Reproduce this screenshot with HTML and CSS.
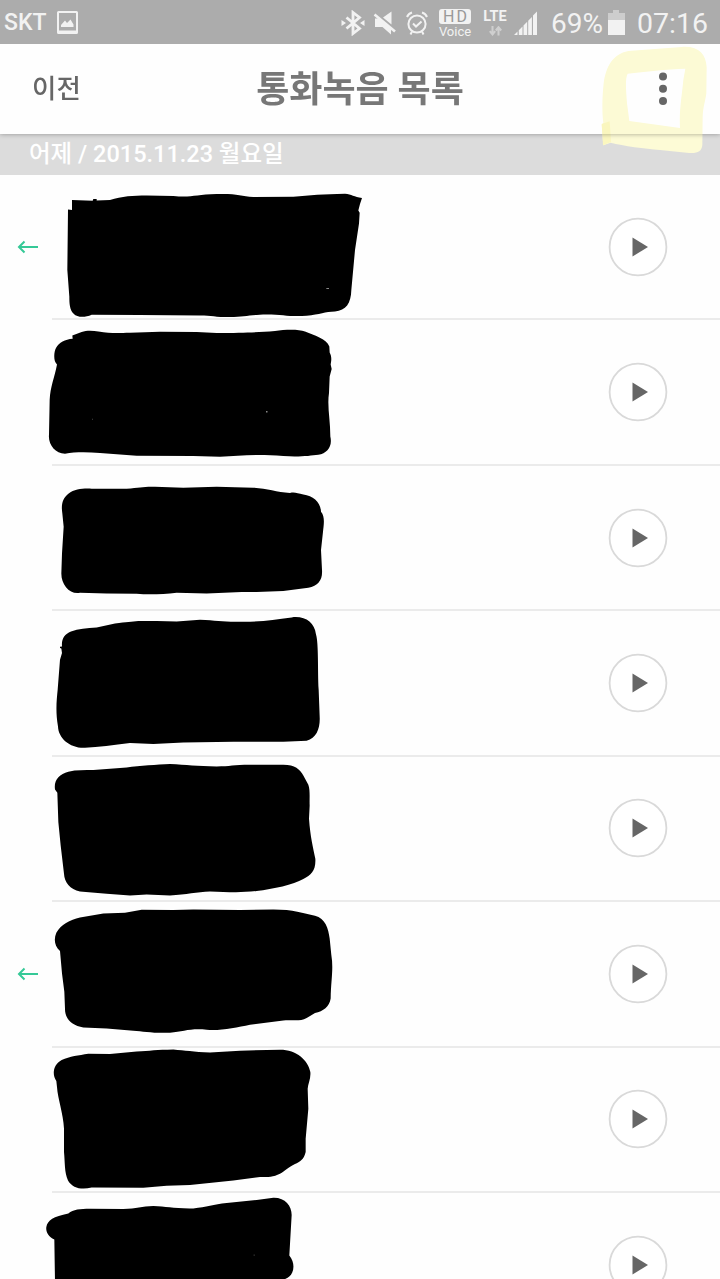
FILE: index.html
```html
<!DOCTYPE html>
<html lang="ko">
<head>
    <meta charset="UTF-8">
    <meta name="viewport" content="width=device-width, initial-scale=1.0">
    <title>통화녹음 목록</title>
    <link rel="stylesheet" href="styles.css">
</head>
<body>
    <svg class="defs" width="0" height="0">
        <symbol id="arrow" viewBox="0 0 22 14">
            <path d="M21 7H2M7.500 1.500L2 7l5.500 5.500" fill="none" stroke="#35c997" stroke-width="2"/>
        </symbol>
        <symbol id="play" viewBox="0 0 60 60">
            <circle cx="30" cy="30" r="28.4" fill="#fff" stroke="#d9d9d9" stroke-width="1.8"/>
            <path d="M24.5 20.5v19l15.5-9.5z" fill="#666"/>
        </symbol>
    </svg>

    <div class="phone">
        <div class="status-bar">
            <span class="carrier">SKT</span>
            <svg class="icon-picture" width="21" height="23" viewBox="0 0 21 23">
                <path fill="#f2f2f2" fill-rule="evenodd" d="M1.5 0h18a1.5 1.5 0 0 1 1.5 1.5v20a1.5 1.5 0 0 1-1.5 1.5h-18A1.5 1.5 0 0 1 0 21.500v-20A1.500 1.500 0 0 1 1.500 0zM2 2v17.500h17V2z"/>
                <path fill="#f2f2f2" d="M4 16v-2l4-4.500 2 2.500 3.500-3.500 3 5V16z"/>
            </svg>

            <div class="status-right">
                <svg class="icon-bluetooth" width="24" height="26" viewBox="0 0 24 26">
                    <path d="M5.500 7.500l13 11-6.500 5V2.500l6.500 5-13 11" fill="none" stroke="#f2f2f2" stroke-width="2.800"/>
                    <path d="M0.500 10l4.500 3-4.500 3zM23.500 10l-4.500 3 4.500 3z" fill="#f2f2f2"/>
                </svg>
                <svg class="icon-mute" width="24" height="26" viewBox="0 0 24 26">
                    <path d="M2 8.500h5.500L18 18v6.500L9.500 17H2zM10 7.500L18.500 1.500v13z" fill="#f2f2f2"/>
                    <path d="M1.500 4.500L22 21.500" stroke="#f2f2f2" stroke-width="2.600"/>
                </svg>
                <svg class="icon-alarm" width="24" height="26" viewBox="0 0 24 26">
                    <g fill="none" stroke="#f2f2f2" stroke-width="2">
                        <circle cx="12" cy="14" r="8.600"/>
                        <path d="M8 13.500l3 3 5.500-5M2 7q1.500-3.500 5-4.500M22 7q-1.500-3.500-5-4.500M7 21.500l-1.500 3M17 21.500l1.500 3"/>
                    </g>
                </svg>
                <div class="hd-voice">
                    <span class="hd">HD</span>
                    <span class="voice">Voice</span>
                </div>
                <div class="lte">
                    <span>LTE</span>
                    <svg width="13" height="10" viewBox="0 0 13 10">
                        <path d="M3.500 0v8M.8 5.200l2.700 3.300 2.700-3.300M9.500 9.500v-8M6.800 4.500l2.700-3.300 2.700 3.300" fill="none" stroke="#cfcfcf" stroke-width="2"/>
                    </svg>
                </div>
                <svg class="icon-signal" width="23" height="24" viewBox="0 0 23 24">
                    <path d="M0 24l3.500-3.500V24zM4.800 19.200l3.700-3.700V24H4.800zM9.500 14.500l3.700-3.700V24H9.500zM14.200 9.800l3.700-3.700V24h-3.700zM19 4.500l4-4V24h-4z" fill="#f2f2f2"/>
                </svg>
                <span class="battery-text">69%</span>
                <svg class="icon-battery" width="17" height="25" viewBox="0 0 17 25">
                    <path d="M0 3h5V0h6v3h6v7H0z" fill="#cdcdcd"/>
                    <path d="M0 10h17v15H0z" fill="#f2f2f2"/>
                </svg>
                <span class="clock">07:16</span>
            </div>
        </div>

        <div class="header">
            <span class="back">이전</span>
            <h1>통화녹음 목록</h1>
            <svg class="menu" width="10" height="34" viewBox="0 0 10 34">
                <g fill="#666">
                    <circle cx="5" cy="4.500" r="4"/>
                    <circle cx="5" cy="16.800" r="4"/>
                    <circle cx="5" cy="29.100" r="4"/>
                </g>
            </svg>
            <!-- 형광펜 표시 -->
            <svg class="marker" width="130" height="140" viewBox="0 0 390 420">
                <path fill="#fdfbd6" fill-rule="evenodd" d="M40 248C36 220 36 175 41 130C48 80 68 42 115 33L275 21C325 17 348 42 350 82L349 160C347 180 339 200 338 230L337 315C335 338 318 341 290 338L210 330C165 326 100 318 62 308L40 316L35 254zM113 101C105 115 108 150 111 190L118 243L270 264C267 210 276 165 280 120L286 86C230 87 165 96 113 101z"/>
                <path fill="#fbf7bf" d="M35 252l24-8 4 62-24 10z"/>
            </svg>
        </div>

        <div class="date-bar">어제 / 2015.11.23 월요일</div>

        <ul class="record-list">
            <li class="record">
                <svg class="direction"><use href="#arrow"/></svg>
                <div class="record-body"><svg class="play"><use href="#play"/></svg></div>
                <svg class="scribble" viewBox="0 -15 1140 436">
                    <path d="M216 60L278 62L280 57H290V61L330 60C365 48 400 46 440 46L520 48C575 53 585 44 650 42C710 40 722 48 760 51L880 50C930 46 970 42 1035 41C1055 43 1062 50 1086 54L1080 72L1075 91L1079 98L1077 130L1065 210L1054 330C1053 370 1038 392 1005 394C975 394 960 403 920 407C870 411 850 403 800 403C750 404 735 410 690 411C645 411 635 406 600 406L420 405L275 404C255 413 232 413 221 401C209 390 208 370 208 350L202 270L204 88L216 90z"/>
                    <path class="speck" d="M979 324h8v2h-8z"/>
                </svg>
            </li>
            <li class="record">
                <svg class="direction"></svg>
                <div class="record-body"><svg class="play"><use href="#play"/></svg></div>
                <svg class="scribble" viewBox="0 421 1140 436">
                    <path d="M217 467L245 457C260 451 280 453 295 455C330 461 350 460 390 459L480 456L590 457L650 460C730 460 770 458 825 454C855 449 895 448 915 455C945 467 980 477 988 500L989 518C996 530 994 545 992 554L995 568L989 590L987 640C981 680 991 720 991 770C998 800 982 820 955 825C930 828 900 832 850 829C770 822 720 828 660 831L580 829L410 828L300 820C260 817 225 817 195 822C165 822 144 794 147 765L149 660C151 620 163 595 171 554C159 545 162 515 168 505C177 488 195 479 218 477z"/>
                    <path class="speck" d="M799 694h3v4h-3z"/>
                    <path class="speck dim" d="M276 717h3v3h-3z"/>
                </svg>
            </li>
            <li class="record">
                <svg class="direction"></svg>
                <div class="record-body"><svg class="play"><use href="#play"/></svg></div>
                <svg class="scribble" viewBox="0 -12 1140 436">
                    <path d="M187 130C183 105 187 85 205 71C225 56 250 55 275 56L380 56C420 53 430 49 465 50L550 53L650 50L760 53C800 55 830 66 870 69C885 65 892 71 910 73C940 78 962 95 963 125C976 140 971 165 969 185L963 240L966 300C968 330 955 347 925 353L850 363L770 366L725 366L620 370L530 368C490 372 450 375 410 371L320 370L240 368C210 374 184 345 184 310L186 250L191 170z"/>
                </svg>
            </li>
            <li class="record">
                <svg class="direction"></svg>
                <div class="record-body"><svg class="play"><use href="#play"/></svg></div>
                <svg class="scribble" viewBox="0 424 1140 436">
                    <path d="M180 531L186 530C184 508 193 493 213 485C235 477 260 475 290 473L345 461C380 457 395 457 415 454L470 454L530 455L600 450C650 452 670 457 720 456C780 457 820 450 875 443C915 438 943 457 948 494C956 520 953 600 956 660L959 740C961 775 950 805 920 813L850 816L700 816L550 818L460 823L390 820C340 827 295 832 255 834C210 836 175 805 174 770C166 725 170 690 173 660L180 570L186 550L184 536L180 535z"/>
                </svg>
            </li>
            <li class="record">
                <svg class="direction"></svg>
                <div class="record-body"><svg class="play"><use href="#play"/></svg></div>
                <svg class="scribble" viewBox="0 5 1140 436">
                    <path d="M165 102C161 75 177 57 205 49C230 43 255 45 280 44L380 36C420 31 470 28 510 26C560 28 590 33 650 33C690 33 700 28 750 28L850 28C885 28 900 42 910 60L925 88C931 105 928 130 929 150L927 190C931 245 939 275 946 310C948 345 934 360 910 371C880 388 820 401 770 407C720 413 680 410 630 408C590 409 560 417 510 420L440 417L390 420L320 415L240 408C210 402 193 380 192 355L182 270L175 200L172 112z"/>
                </svg>
            </li>
            <li class="record">
                <svg class="direction"><use href="#arrow"/></svg>
                <div class="record-body"><svg class="play"><use href="#play"/></svg></div>
                <svg class="scribble" viewBox="0 441 1140 436">
                    <path d="M180 588C163 573 161 552 169 533C182 508 210 494 240 487L310 475L375 473L425 464L520 465L580 463L720 465L820 463C880 463 910 474 945 482C976 490 985 520 989 550L994 600C1001 640 993 675 992 730C988 755 970 768 945 774L920 789C900 800 880 794 850 796L750 809C710 817 660 828 620 824C570 819 550 830 510 833C460 835 430 829 400 827L320 820L250 817C215 812 194 790 195 760L193 710L186 655z"/>
                </svg>
            </li>
            <li class="record">
                <svg class="direction"></svg>
                <div class="record-body"><svg class="play"><use href="#play"/></svg></div>
                <svg class="scribble" viewBox="0 38 1140 436">
                    <path d="M169 137C155 117 160 87 185 74C210 62 235 60 265 55L330 56L410 48C450 46 470 43 520 42C555 45 580 49 630 51L720 46L840 43C890 43 925 75 931 110C933 130 924 145 923 160L925 220L917 310V350C911 374 900 379 885 386C865 395 855 408 840 415C820 425 805 425 780 425L700 435L570 449L500 451L430 457L275 456C245 464 217 458 204 435C193 412 195 380 192 350V280C190 235 173 190 171 155z"/>
                </svg>
            </li>
            <li class="record">
                <svg class="direction"></svg>
                <div class="record-body"><svg class="play"><use href="#play"/></svg></div>
                <svg class="scribble" viewBox="0 474 1140 436">
                    <path d="M163 613C144 605 137 588 139 576C143 554 160 545 205 535C220 523 240 521 270 521L370 522C410 521 425 514 460 513C500 514 520 521 580 520C620 517 640 508 680 504L770 495L820 488C855 487 875 512 875 540L868 661C884 680 883 705 873 719C866 728 858 731 855 732V740H165z"/>
                    <path class="speck dim" d="M761 658h3v4h-3z"/>
                </svg>
            </li>
        </ul>
    </div>
</body>
</html>
```

FILE: styles.css
```css
* {
    box-sizing: border-box;
}
body {
    margin: 0;
    background: #fff;
    font-family: Roboto, "Noto Sans CJK KR", sans-serif;
}
svg {
    display: block;
    flex-shrink: 0;
}
.defs {
    position: absolute;
}
.phone {
    width: 720px;
    height: 1279px;
    overflow: hidden;
    background: #fefefe;
}

/* 상태바 */
.status-bar {
    display: flex;
    align-items: center;
    height: 44px;
    padding: 1px 10px 0 4px;
    background: #acacac;
    color: #f2f2f2;
}
.carrier {
    width: 53px;
    font-size: 23px;
    font-weight: 500;
}
.status-right {
    display: flex;
    align-items: center;
    margin-left: auto;
}
.icon-mute {
    margin-left: 8px;
}
.icon-alarm {
    margin-left: 8px;
}
.hd-voice {
    display: flex;
    flex-direction: column;
    align-items: center;
    width: 32px;
    margin-left: 10px;
}
.hd {
    width: 32px;
    height: 15px;
    border-radius: 3px;
    background: #f2f2f2;
    color: #999;
    font-size: 16px;
    line-height: 15px;
    letter-spacing: 2px;
    text-indent: 2px;
    text-align: center;
}
.voice {
    margin-top: 2px;
    font-size: 13px;
    line-height: 11px;
}
.lte {
    display: flex;
    flex-direction: column;
    align-items: center;
    width: 26px;
    margin-left: 11px;
    font-size: 14.5px;
    font-weight: 700;
    line-height: 14px;
}
.lte svg {
    margin-top: 2px;
}
.icon-signal {
    margin-left: 6px;
}
.battery-text {
    width: 57px;
    margin-left: 14px;
    padding-top: 2px;
    font-size: 28px;
}
.icon-battery {
    margin-right: 12px;
}
.clock {
    width: 73px;
    padding-top: 2px;
    font-size: 28.5px;
}

/* 상단 헤더 */
.header {
    position: relative;
    z-index: 1;
    display: grid;
    grid-template-columns: 1fr auto 1fr;
    align-items: center;
    height: 90px;
    padding: 0 32px;
    background: #fefefe;
    color: #666;
    box-shadow: 0 0 5px rgba(0,0,0,0.35);
    clip-path: inset(0 0 -20px 0);
}
.back {
    padding-bottom: 6px;
    font-size: 26.5px;
    font-weight: 500;
}
.header h1 {
    margin: 0;
    padding-bottom: 7px;
    font-size: 36px;
    font-weight: 700;
    color: #777;
}
.menu {
    justify-self: end;
    margin-right: 20px;
}
.marker {
    position: absolute;
    top: -4px;
    right: 0;
    mix-blend-mode: multiply;
}
.date-bar {
    height: 41px;
    padding-left: 29px;
    background: #dcdcdc;
    color: #fff;
    font-size: 23.5px;
    font-weight: 500;
    line-height: 41px;
}

/* 녹음 목록 */
.record-list {
    margin: 0;
    padding: 0;
    list-style: none;
}
.record {
    position: relative;
    display: flex;
    align-items: center;
    height: 145.43px;
}
.direction {
    width: 22px;
    height: 14px;
    margin: 0 13px 2px 17px;
}
.record-body {
    display: flex;
    flex: 1;
    align-items: center;
    justify-content: flex-end;
    height: 100%;
    padding-right: 52px;
    border-bottom: 2px solid #ebebeb;
}
.play {
    width: 60px;
    height: 60px;
}
.scribble {
    position: absolute;
    top: 0;
    left: 0;
    width: 380px;
    height: 145.43px;
    overflow: visible;
}
.speck {
    fill: #ccc;
}
.speck.dim {
    fill: #444;
}
```
